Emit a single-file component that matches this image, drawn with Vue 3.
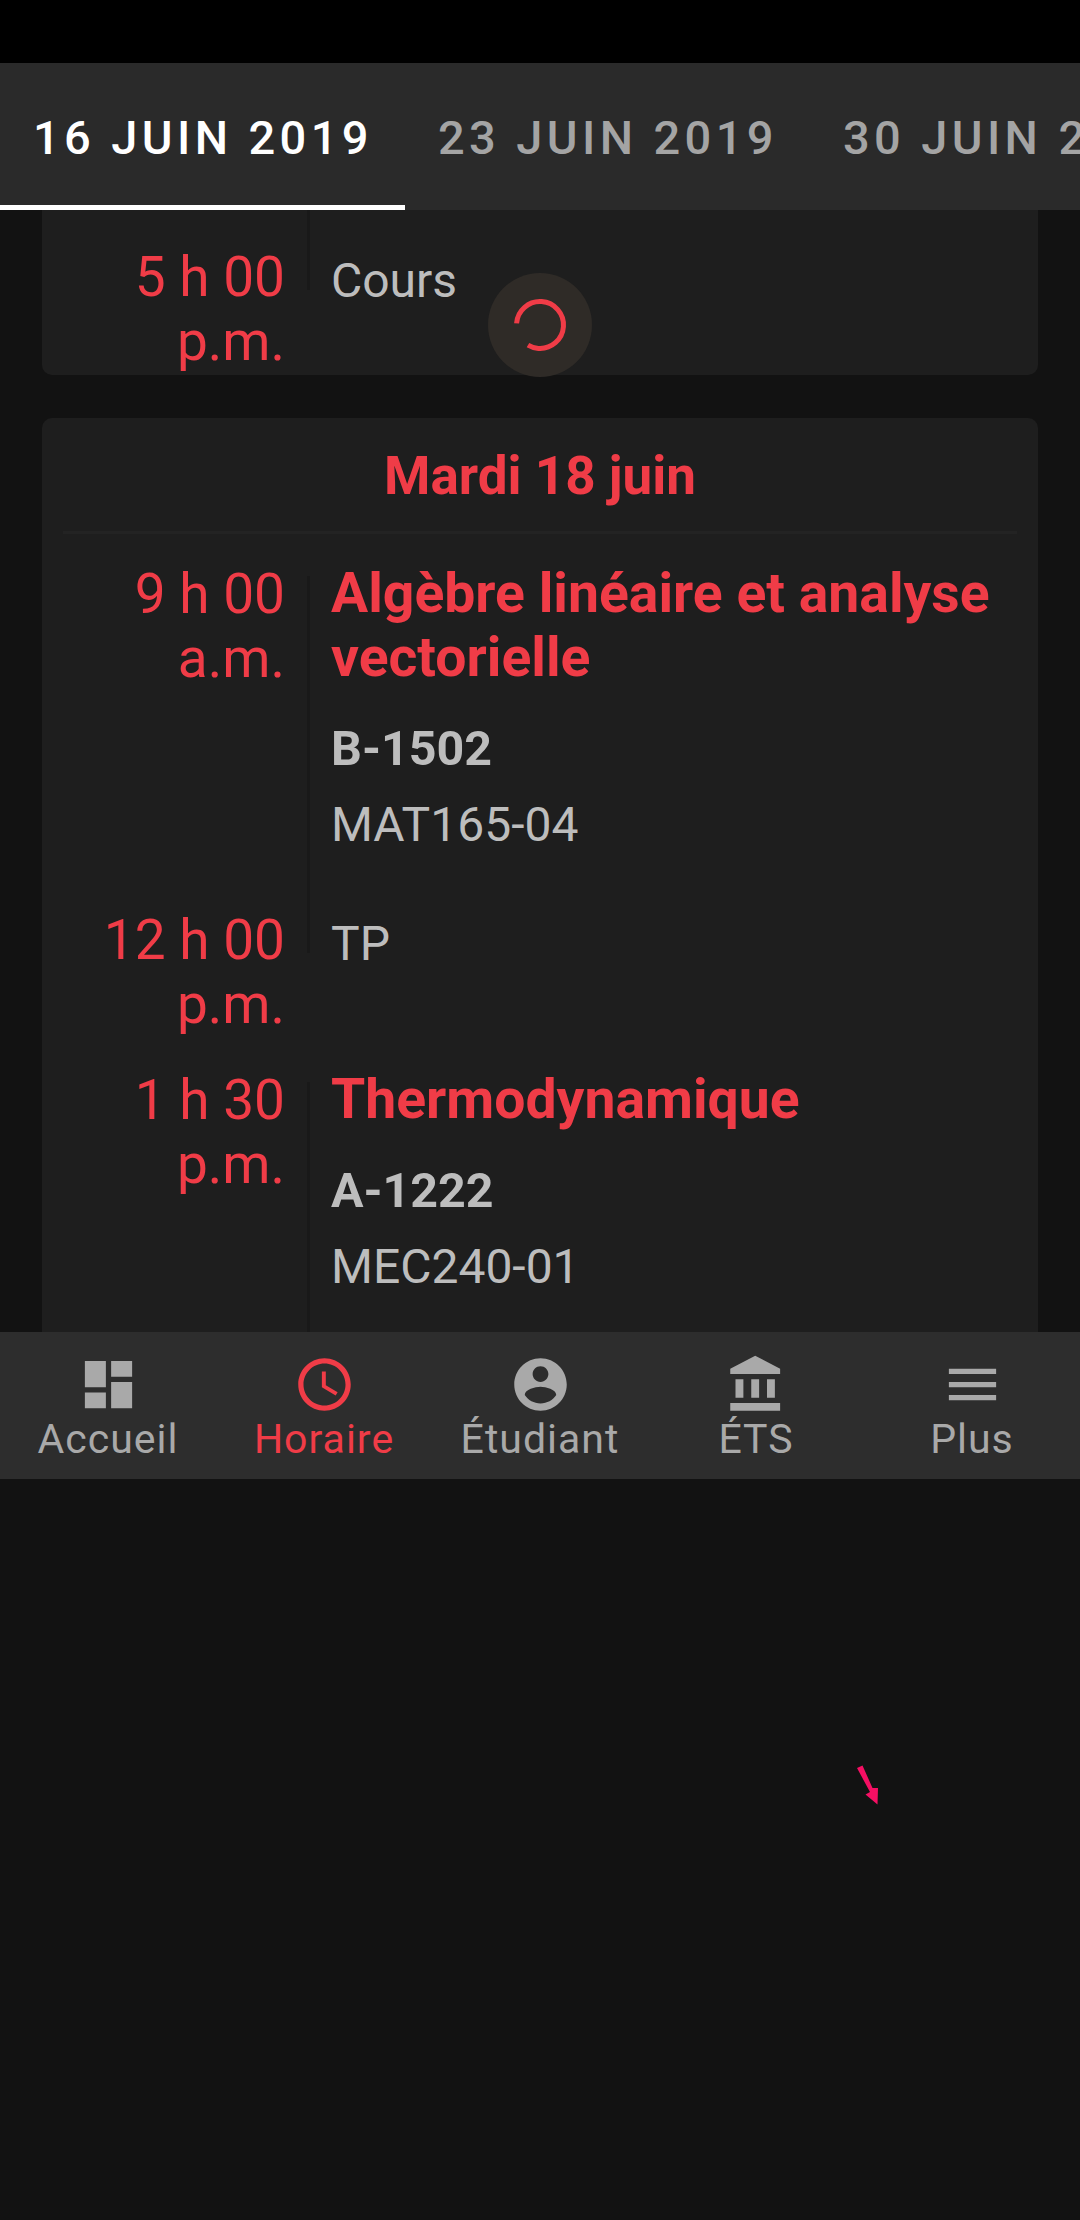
<script setup>
const weeks = ['16 JUIN 2019', '23 JUIN 2019', '30 JUIN 2019']
const navItems = [
  { label: 'Accueil', path: 'M3 13h8V3H3v10zm0 8h8v-6H3v6zm10 0h8V11h-8v10zm0-18v6h8V3h-8z' },
  { label: 'Horaire', active: true, path: 'M11.99 2C6.47 2 2 6.48 2 12s4.47 10 9.99 10C17.52 22 22 17.52 22 12S17.52 2 11.99 2zM12 20c-4.42 0-8-3.58-8-8s3.58-8 8-8 8 3.58 8 8-3.58 8-8 8zm.5-13H11v6l5.25 3.15.75-1.23-4.5-2.67z' },
  { label: 'Étudiant', path: 'M12 2C6.48 2 2 6.48 2 12s4.48 10 10 10 10-4.48 10-10S17.52 2 12 2zm0 3c1.66 0 3 1.34 3 3s-1.34 3-3 3-3-1.34-3-3 1.34-3 3-3zm0 14.2c-2.5 0-4.71-1.28-6-3.22.03-1.99 4-3.08 6-3.08 1.99 0 5.97 1.09 6 3.08-1.29 1.94-3.5 3.22-6 3.22z' },
  { label: 'ÉTS', path: 'M4 10v7h3v-7H4zm6 0v7h3v-7h-3zM2 22h19v-3H2v3zm14-12v7h3v-7h-3zm-4.5-9L2 6v2h19V6l-9.5-5z' },
  { label: 'Plus', path: 'M3 18h18v-2H3v2zm0-5h18v-2H3v2zm0-7v2h18V6H3z' },
]
const courses = [
  { start: '9 h 00', end: 'a.m.', title: 'Algèbre linéaire et analyse vectorielle', room: 'B-1502', code: 'MAT165-04' },
  { start: '12 h 00', end: 'p.m.', note: 'TP' },
  { start: '1 h 30', end: 'p.m.', title: 'Thermodynamique', room: 'A-1222', code: 'MEC240-01' },
]
</script>

<template>
  <div class="screen">
    <div class="status"></div>
    <div class="tabs">
      <div v-for="(w, i) in weeks" :key="w" class="tab" :class="{ current: i === 0 }">{{ w }}</div>
    </div>
    <div class="content">
      <div class="card first">
        <div class="row">
          <div class="time">5 h 00<br />p.m.</div>
          <div class="detail short"><div class="note">Cours</div></div>
        </div>
      </div>
      <div class="card">
        <div class="day">Mardi 18 juin</div>
        <div v-for="c in courses" :key="c.start" class="row">
          <div class="time">{{ c.start }}<br />{{ c.end }}</div>
          <div v-if="c.note" class="detail short"><div class="note">{{ c.note }}</div></div>
          <div v-else class="detail">
            <div class="title">{{ c.title }}</div>
            <div class="room">{{ c.room }}</div>
            <div class="code">{{ c.code }}</div>
          </div>
        </div>
      </div>
      <div class="spinner">
        <svg viewBox="0 0 58 58" width="58" height="58">
          <circle cx="29" cy="29" r="23.5" fill="none" stroke="#f03c47" stroke-width="5" stroke-dasharray="121 27" transform="rotate(184 29 29)" />
        </svg>
      </div>
    </div>
    <nav class="nav">
      <div v-for="n in navItems" :key="n.label" class="nav-item" :class="{ active: n.active }">
        <svg viewBox="0 0 24 24" width="63" height="63"><path :d="n.path" fill="currentColor" /></svg>
        <span>{{ n.label }}</span>
      </div>
    </nav>
    <div class="rest">
      <svg class="arrow" viewBox="0 0 100 90" width="100" height="90">
        <path d="M37 28 L42.5 25.5 L52.5 48 L58 48 L57.5 64.5 L45.5 54.5 L50 52 Z" fill="#f50f63" />
      </svg>
    </div>
  </div>
</template>

<style scoped>
.screen {
  width: 1080px;
  height: 2220px;
  display: flex;
  flex-direction: column;
  background: #121212;
  font-family: Roboto, sans-serif;
  overflow: hidden;
}

.status {
  height: 63px;
  background: #000;
  flex: none;
}

.tabs {
  height: 147px;
  flex: none;
  display: flex;
  background: #2a2a2a;
  overflow: hidden;
}

.tab {
  flex: none;
  padding: 0 32px 0 33px;
  height: 147px;
  box-sizing: border-box;
  line-height: 150px;
  font-size: 47px;
  font-weight: 500;
  letter-spacing: 4.4px;
  color: #a4a4a4;
  white-space: nowrap;
}

.tab.current {
  color: #fff;
  border-bottom: 5px solid #fff;
}

.content {
  position: relative;
  height: 1122px;
  flex: none;
  padding: 0 42px;
  overflow: hidden;
}

.card {
  background: #1e1e1e;
  border-radius: 10px;
  padding: 0 21px 60px;
}

.card.first {
  height: 165px;
  box-sizing: border-box;
  padding: 35px 21px 0;
  margin-bottom: 43px;
  border-radius: 0 0 10px 10px;
  overflow: hidden;
}

.day {
  padding: 26px 0 23px;
  margin-bottom: 28px;
  line-height: 64px;
  text-align: center;
  font-size: 53px;
  font-weight: 700;
  color: #f03c47;
  border-bottom: 3px solid #232323;
}

.row {
  display: flex;
  align-items: flex-start;
}

.time {
  width: 222px;
  flex: none;
  text-align: right;
  font-size: 55px;
  line-height: 64px;
  white-space: nowrap;
  color: #f03c47;
}

.detail {
  position: relative;
  margin-left: 46px;
  padding-bottom: 51px;
  min-width: 0;
  flex: 1;
}

.detail:not(.short)::before {
  content: "";
  position: absolute;
  left: -24px;
  top: 14px;
  bottom: 0;
  width: 3px;
  background: #191919;
}

.detail.short {
  height: 128px;
  padding-bottom: 32px;
}

.detail.short::before {
  content: "";
  position: absolute;
  left: -24px;
  top: -40px;
  height: 85px;
  width: 3px;
  background: #191919;
}

.title {
  font-size: 55.3px;
  font-weight: 700;
  line-height: 64px;
  color: #f03c47;
}

.room {
  margin-top: 27px;
  font-size: 48.4px;
  font-weight: 700;
  line-height: 64px;
  color: #bdbdbd;
}

.code,
.note {
  font-size: 48px;
  line-height: 64px;
  color: #bdbdbd;
}

.code {
  margin-top: 12px;
}

.note {
  margin-top: 4px;
}

.spinner {
  position: absolute;
  left: 488px;
  top: 63px;
  width: 104px;
  height: 104px;
  border-radius: 50%;
  background: #2f2b27;
  display: flex;
  align-items: center;
  justify-content: center;
}

.nav {
  height: 147px;
  flex: none;
  display: flex;
  background: #2d2d2d;
}

.nav-item {
  flex: 1;
  display: flex;
  flex-direction: column;
  align-items: center;
  padding-top: 21px;
  color: #a9a9a9;
  font-size: 41px;
  letter-spacing: 1px;
}

.nav-item span {
  line-height: 46px;
}

.nav-item.active {
  color: #f03c47;
}

.rest {
  flex: 1;
  position: relative;
}

.arrow {
  position: absolute;
  left: 820px;
  top: 261px;
}
</style>
